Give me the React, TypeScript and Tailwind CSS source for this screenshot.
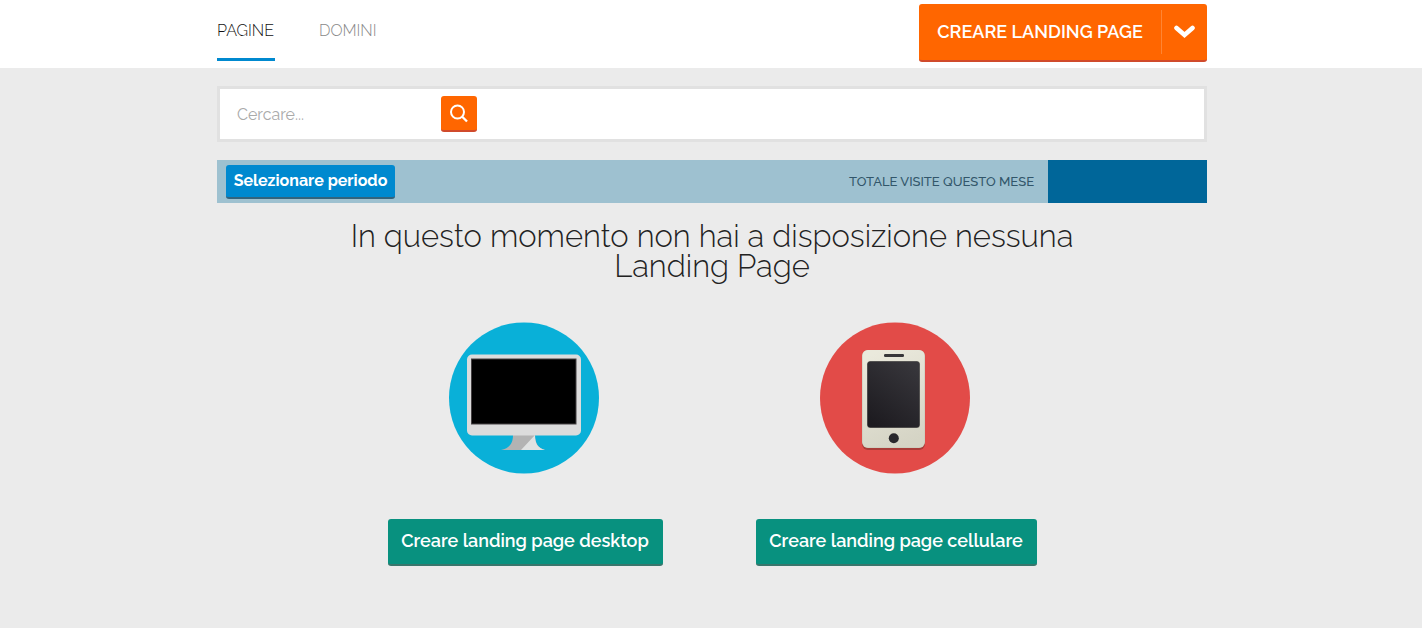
import React from "react";

function DesktopIcon() {
  return (
    <svg width="152" height="152" viewBox="0 0 152 152" aria-hidden="true">
      <ellipse cx="75" cy="76" rx="75" ry="75.6" fill="#09b0d8" />
      <path d="M64 113h22c0 8 3 13 10 15H52c9-2 12-7 12-15z" fill="#b3b3b3" />
      <path d="M86 113c0 9 3 13 10 15H72z" fill="#e0e2e2" />
      <rect x="18" y="32.500" width="114" height="81" rx="5" fill="#dcdcdc" />
      <rect x="22" y="36.500" width="105.500" height="66" fill="#444042" />
      <rect x="23" y="37.500" width="103.500" height="64" fill="#000" />
    </svg>
  );
}

function PhoneIcon() {
  return (
    <svg width="152" height="152" viewBox="0 0 152 152" aria-hidden="true">
      <defs>
        <linearGradient id="phone-body" x1="0.3" y1="0" x2="0.6" y2="1">
          <stop offset="0" stopColor="#eae9dc" />
          <stop offset="1" stopColor="#d5d4c5" />
        </linearGradient>
        <linearGradient id="phone-screen" x1="0.8" y1="0" x2="0.2" y2="1">
          <stop offset="0" stopColor="#37363b" />
          <stop offset="1" stopColor="#1d1b20" />
        </linearGradient>
      </defs>
      <ellipse cx="75" cy="76" rx="75" ry="75.6" fill="#e24b48" />
      <rect x="42" y="30" width="63" height="98" rx="6" fill="#a93c38" />
      <rect x="42" y="28" width="63" height="98" rx="6" fill="#c8c6b6" />
      <rect x="42.5" y="28" width="62" height="97.500" rx="5.500" fill="url(#phone-body)" />
      <rect x="64" y="32" width="20" height="3" rx="1.200" fill="#38373a" />
      <rect x="47" y="39" width="53" height="67" rx="3.500" fill="#77766f" />
      <rect x="47.500" y="39.500" width="52" height="66" rx="3" fill="url(#phone-screen)" />
      <circle cx="73.800" cy="116.300" r="5" fill="#29282c" />
    </svg>
  );
}

export default function App() {
  return (
    <div className="min-h-screen bg-[#ebebeb] font-['Raleway','Lato',sans-serif] text-[#333]">
      <header className="bg-white pl-0.5">
        <div className="mx-auto flex h-[68px] max-w-[990px] items-start justify-between">
          <nav className="flex gap-11 text-base font-light">
            <a href="#pagine" aria-current="page" className="flex h-[61px] w-[58px] items-center border-b-3 border-[#0089cf] pt-1 text-[#111]">
              PAGINE
            </a>
            <a href="#domini" className="flex h-[61px] w-[58px] items-center border-b-3 border-transparent pt-1 text-[#888]">
              DOMINI
            </a>
          </nav>
          <div className="mt-1 flex h-[58px] w-72 items-center rounded-[3px] border-b-2 border-[#d04a2b] bg-[#ff6600] text-white">
            <button type="button" className="h-full flex-1 text-lg font-semibold whitespace-nowrap">
              CREARE LANDING PAGE
            </button>
            <button type="button" aria-label="Altre opzioni" className="flex h-11 w-[46px] items-center justify-center border-l border-[#ff8533]">
              <svg width="22" height="14" viewBox="0 0 22 14" fill="none" aria-hidden="true">
                <path d="M2.500 3 10.500 10 18.500 3" stroke="#fff" strokeWidth="4.600" strokeLinecap="round" />
              </svg>
            </button>
          </div>
        </div>
      </header>

      <main className="pt-[18px] pl-0.5">
        <div className="mx-auto flex max-w-[990px] flex-col gap-[18px]">
          <form className="flex h-14 items-center border-3 border-[#e1e1e1] bg-white" onSubmit={(e) => e.preventDefault()}>
            <input
              type="text"
              aria-label="Cercare"
              placeholder="Cercare..."
              className="h-9 w-[221px] pl-[17px] text-base outline-none placeholder:text-[#aaa]"
            />
            <button type="submit" aria-label="Cerca" className="flex size-9 items-center justify-center rounded-[3px] border-b-2 border-[#d04a2b] bg-[#ff6600]">
              <svg width="20" height="20" viewBox="0 0 20 20" fill="none" stroke="#fff" strokeWidth="2" aria-hidden="true">
                <circle cx="8.500" cy="9" r="6.500" />
                <path d="m13 13.500 5 5" strokeWidth="2.300" />
              </svg>
            </button>
          </form>

          <div className="flex h-[43px] items-center bg-[#9ec1d0]">
            <button type="button" className="ml-[9px] h-[34px] w-[169px] rounded-[3px] border-b-2 border-[#33647d] bg-[#0089cf] text-base font-bold text-white">
              Selezionare periodo
            </button>
            <span className="mr-[14px] ml-auto text-[13px] font-medium text-[#32566a]">TOTALE VISITE QUESTO MESE</span>
            <div className="w-[159px] self-stretch bg-[#006699]" />
          </div>

          <h1 className="mx-auto max-w-[792px] text-center text-[31px] leading-[30px] font-light text-[#222]">
            In questo momento non hai a disposizione nessuna Landing Page
          </h1>

          <div className="flex flex-wrap justify-center gap-[93px] pt-[23px]">
            <section className="flex w-[275px] flex-col items-center gap-[45px]">
              <DesktopIcon />
              <button type="button" className="h-[47px] w-full rounded-[3px] border-b-2 border-[#39766c] bg-[#08917f] pb-0.5 text-lg font-semibold text-white">
                Creare landing page desktop
              </button>
            </section>
            <section className="flex w-[281px] flex-col items-center gap-[45px]">
              <PhoneIcon />
              <button type="button" className="h-[47px] w-full rounded-[3px] border-b-2 border-[#39766c] bg-[#08917f] pb-0.5 text-lg font-semibold text-white">
                Creare landing page cellulare
              </button>
            </section>
          </div>
        </div>
      </main>
    </div>
  );
}
